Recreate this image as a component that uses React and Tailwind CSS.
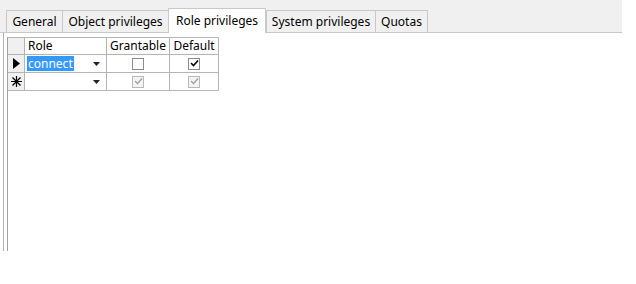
import React from 'react'

const tabs = [
  { label: 'General', w: 56 },
  { label: 'Object privileges', w: 106 },
  { label: 'Role privileges', w: 98, active: true },
  { label: 'System privileges', w: 109 },
  { label: 'Quotas', w: 52 },
]

function Check({ checked, disabled }) {
  return (
    <span
      className={`inline-flex h-[12px] w-[12px] items-center justify-center border ${
        disabled ? 'border-[#b8b8b8] bg-[#f4f4f4]' : 'border-[#8a8a8a] bg-white'
      }`}
    >
      {checked && (
        <svg width="9" height="9" viewBox="0 0 9 9">
          <path
            d="M1 4 L3.5 6.5 L8 1.5"
            fill="none"
            stroke={disabled ? '#a8a8a8' : '#000'}
            strokeWidth="1.6"
          />
        </svg>
      )}
    </span>
  )
}

function DropArrow() {
  return (
    <svg width="7" height="4" viewBox="0 0 7 4">
      <path d="M0 0 L7 0 L3.5 4 Z" fill="#222" />
    </svg>
  )
}

export default function App() {
  const font = { fontFamily: '"Noto Sans", "Liberation Sans", sans-serif' }
  return (
    <div className="w-[636px] h-[284px] bg-white text-[12px] text-black" style={font}>
      {/* tab strip */}
      <div className="w-[622px] h-[33px] bg-[#f0f0f0] flex items-end pl-[6px] border-b border-[#c8c8c8]">
        {tabs.map((t) =>
          t.active ? (
            <div
              key={t.label}
              className="relative z-10 -mb-px h-[25px] bg-white border border-b-0 border-[#c8c8c8] flex items-center justify-center"
              style={{ width: t.w }}
            >
              {t.label}
            </div>
          ) : (
            <div
              key={t.label}
              className="h-[22px] bg-[#f0f0f0] border border-b-0 border-[#c8c8c8] -mr-px flex items-center justify-center"
              style={{ width: t.w + 1 }}
            >
              {t.label}
            </div>
          )
        )}
      </div>

      {/* panel body */}
      <div className="ml-[3px] h-[218px] w-[619px] border-l border-[#b4b4b4] pl-[3px] pt-[4px]">
        <div className="h-[214px] border-l border-[#a0a0a0]">
          <div className="grid grid-cols-[17px_82px_63px_49px] w-[211px]">
            {/* header */}
            <div className="h-[18px] bg-[#f0f0f0] border-r border-b border-t border-[#b4b4b4]" />
            <div className="h-[18px] border-r border-b border-t border-[#b4b4b4] pl-[3px] leading-[16px]">Role</div>
            <div className="h-[18px] border-r border-b border-t border-[#b4b4b4] text-center leading-[16px]">Grantable</div>
            <div className="h-[18px] border-r border-b border-t border-[#b4b4b4] text-center leading-[16px]">Default</div>

            {/* row 1 */}
            <div className="h-[18px] bg-[#f0f0f0] border-r border-b border-[#b4b4b4] flex items-center justify-center">
              <svg width="7" height="11" viewBox="0 0 7 11">
                <path d="M0 0 L7 5.5 L0 11 Z" fill="#000" />
              </svg>
            </div>
            <div className="h-[18px] border-r border-b border-[#b4b4b4] flex items-center pl-[2px] pr-[6px]">
              <span className="bg-[#3399ff] text-white leading-[15px] px-[1px]">connect</span>
              <span className="ml-auto flex">
                <DropArrow />
              </span>
            </div>
            <div className="h-[18px] border-r border-b border-[#b4b4b4] flex items-center justify-center">
              <Check />
            </div>
            <div className="h-[18px] border-r border-b border-[#b4b4b4] flex items-center justify-center">
              <Check checked />
            </div>

            {/* new row */}
            <div className="h-[18px] bg-[#f0f0f0] border-r border-b border-[#b4b4b4] flex items-center justify-center">
              <svg width="11" height="11" viewBox="0 0 11 11">
                <path d="M5.5 0 V11 M0 5.5 H11 M1.5 1.5 L9.5 9.5 M9.5 1.5 L1.5 9.5" stroke="#000" strokeWidth="1.2" />
              </svg>
            </div>
            <div className="h-[18px] border-r border-b border-[#b4b4b4] flex items-center pr-[6px]">
              <span className="ml-auto flex">
                <DropArrow />
              </span>
            </div>
            <div className="h-[18px] border-r border-b border-[#b4b4b4] flex items-center justify-center">
              <Check checked disabled />
            </div>
            <div className="h-[18px] border-r border-b border-[#b4b4b4] flex items-center justify-center">
              <Check checked disabled />
            </div>
          </div>
        </div>
      </div>
    </div>
  )
}
